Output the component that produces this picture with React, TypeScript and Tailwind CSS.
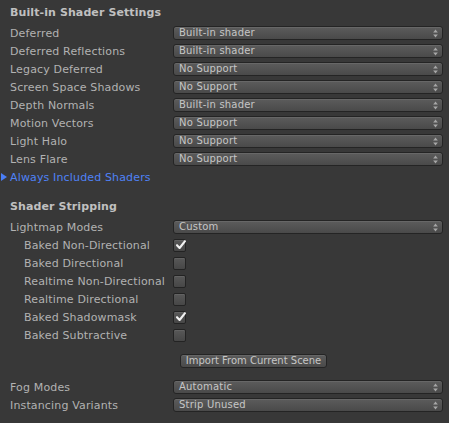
import React from 'react';

const shaderRows: [string, string][] = [
  ['Deferred', 'Built-in shader'],
  ['Deferred Reflections', 'Built-in shader'],
  ['Legacy Deferred', 'No Support'],
  ['Screen Space Shadows', 'No Support'],
  ['Depth Normals', 'Built-in shader'],
  ['Motion Vectors', 'No Support'],
  ['Light Halo', 'No Support'],
  ['Lens Flare', 'No Support'],
];

const lightmapRows: [string, boolean][] = [
  ['Baked Non-Directional', true],
  ['Baked Directional', false],
  ['Realtime Non-Directional', false],
  ['Realtime Directional', false],
  ['Baked Shadowmask', true],
  ['Baked Subtractive', false],
];

const Popup: React.FC<{ value: string }> = ({ value }) => (
  <div className="relative flex h-[14px] flex-1 items-center rounded-[3px] border border-[#242424] bg-gradient-to-b from-[#5c5c5c] to-[#4a4a4a] pl-[5px] shadow-[inset_0_1px_0_rgba(255,255,255,0.08)]">
    <span className="text-[10px] leading-none tracking-[0.2px] text-[#c6c6c6]">{value}</span>
    <svg className="absolute right-[4px] top-[2px]" width="5" height="9" viewBox="0 0 5 9">
      <path d="M2.5 0.5 L4.8 3.5 L0.2 3.5 Z" fill="#a8a8a8" />
      <path d="M2.5 8.5 L4.8 5.5 L0.2 5.5 Z" fill="#a8a8a8" />
    </svg>
  </div>
);

const Toggle: React.FC<{ on: boolean }> = ({ on }) => (
  <div className="relative h-[13px] w-[13px] rounded-[2px] border border-[#232323] bg-gradient-to-b from-[#585858] to-[#474747] shadow-[inset_0_1px_0_rgba(255,255,255,0.07)]">
    {on && (
      <svg className="absolute left-[1px] top-[-1px]" width="12" height="12" viewBox="0 0 12 12">
        <path d="M2 6.2 L4.6 9 L10 2.2" stroke="#f2f2f2" strokeWidth="2.1" fill="none" strokeLinecap="round" strokeLinejoin="round" />
      </svg>
    )}
  </div>
);

const Row: React.FC<{ label: string; indent?: boolean; children?: React.ReactNode }> = ({ label, indent, children }) => (
  <div className="flex h-[18px] items-center">
    <div className={`w-[173px] shrink-0 text-[11px] leading-none tracking-[0.15px] text-[#b2b2b2] ${indent ? 'pl-[24px]' : 'pl-[10px]'}`}>{label}</div>
    <div className="flex flex-1 items-center pr-[6px]">{children}</div>
  </div>
);

export default function App() {
  return (
    <div className="h-[423px] w-[449px] overflow-hidden bg-[#383838] pt-[4px] font-['DejaVu_Sans',sans-serif]">
      <div className="flex h-[18px] items-center pl-[10px] text-[11px] font-bold tracking-[0.1px] text-[#c0c0c0]">Built-in Shader Settings</div>
      <div className="mt-[2px]">
        {shaderRows.map(([label, value]) => (
          <Row key={label} label={label}>
            <Popup value={value} />
          </Row>
        ))}
        <div className="flex h-[18px] items-center">
          <svg className="ml-[1px] mr-[3px]" width="6" height="8" viewBox="0 0 6 8">
            <path d="M0 0 L6 4 L0 8 Z" fill="#4a7ef5" />
          </svg>
          <span className="text-[11px] leading-none tracking-[0.15px] text-[#4f82f7]">Always Included Shaders</span>
        </div>
      </div>

      <div className="mt-[12px] flex h-[18px] items-center pl-[10px] text-[11px] font-bold tracking-[0.1px] text-[#c0c0c0]">Shader Stripping</div>
      <div className="mt-[2px]">
        <Row label="Lightmap Modes">
          <Popup value="Custom" />
        </Row>
        {lightmapRows.map(([label, on]) => (
          <Row key={label} label={label} indent>
            <Toggle on={on} />
          </Row>
        ))}
      </div>

      <div className="mt-[10px] flex h-[14px] pl-[180px]">
        <button className="flex h-[14px] w-[147px] items-center justify-center rounded-[3px] border border-[#242424] bg-gradient-to-b from-[#5c5c5c] to-[#4a4a4a] text-[10px] leading-none text-[#c6c6c6] shadow-[inset_0_1px_0_rgba(255,255,255,0.08)]">
          Import From Current Scene
        </button>
      </div>

      <div className="mt-[10px]">
        <Row label="Fog Modes">
          <Popup value="Automatic" />
        </Row>
        <Row label="Instancing Variants">
          <Popup value="Strip Unused" />
        </Row>
      </div>
    </div>
  );
}
